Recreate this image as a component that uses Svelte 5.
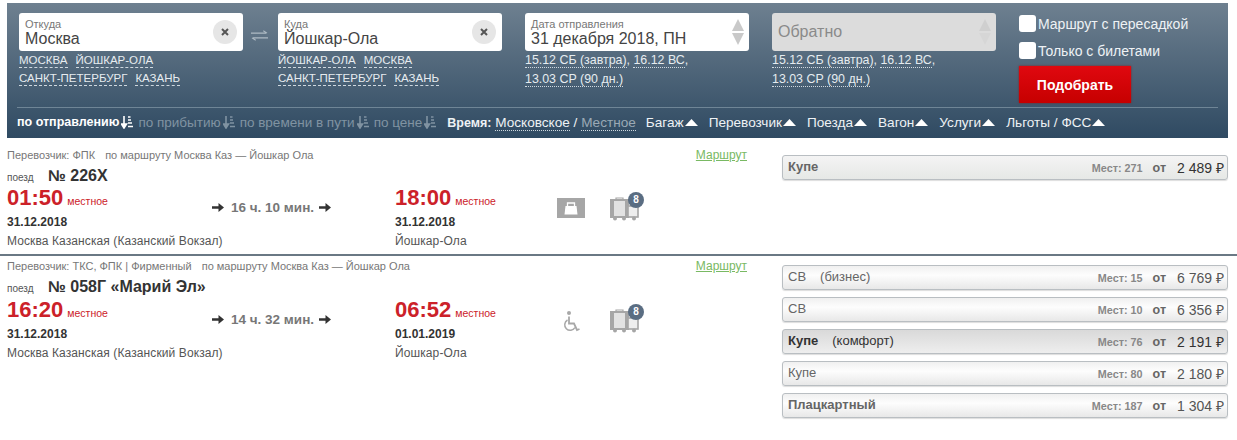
<script>
  const quick = [['МОСКВА', 'ЙОШКАР-ОЛА'], ['САНКТ-ПЕТЕРБУРГ', 'КАЗАНЬ']];
  const quick2 = [['ЙОШКАР-ОЛА', 'МОСКВА'], ['САНКТ-ПЕТЕРБУРГ', 'КАЗАНЬ']];
  const sorts = [
    { t: 'по отправлению', on: true },
    { t: 'по прибытию' },
    { t: 'по времени в пути' },
    { t: 'по цене' }
  ];
  const filters = ['Багаж', 'Перевозчик', 'Поезда', 'Вагон', 'Услуги', 'Льготы / ФСС'];
  const trains = [
    {
      carrier: 'Перевозчик: ФПК', route: 'по маршруту Москва Каз — Йошкар Ола', num: '№ 226Х',
      dep: '01:50', depDate: '31.12.2018', arr: '18:00', arrDate: '31.12.2018', dur: '16 ч. 10 мин.',
      icon: 'bag', h: 116,
      seats: [{ n: 'Купе', strong: true, m: 271, p: '2 489', shade: true }]
    },
    {
      carrier: 'Перевозчик: ТКС, ФПК | Фирменный', route: 'по маршруту Москва Каз — Йошкар Ола', num: '№ 058Г «Марий Эл»',
      dep: '16:20', depDate: '31.12.2018', arr: '06:52', arrDate: '01.01.2019', dur: '14 ч. 32 мин.',
      icon: 'wheel', h: 183,
      seats: [
        { n: 'СВ', x: '(бизнес)', m: 15, p: '6 769' },
        { n: 'СВ', m: 10, p: '6 356' },
        { n: 'Купе', strong: true, x: '(комфорт)', m: 76, p: '2 191', active: true },
        { n: 'Купе', m: 80, p: '2 180' },
        { n: 'Плацкартный', strong: true, m: 187, p: '1 304' }
      ]
    }
  ];
</script>

{#snippet sortIcon()}
  <svg class="sorticon" width="12" height="13" viewBox="0 0 12 13" aria-hidden="true">
    <path d="M3 0v9M0.5 8l2.500 4 2.500-4z" fill="currentColor" stroke="currentColor" stroke-width="1.600"/>
    <path d="M7 1h2.500M7 4h3M7 7h4M7 10.500h5" stroke="currentColor" stroke-width="1.600" fill="none"/>
  </svg>
{/snippet}

{#snippet arrow()}
  <svg width="12" height="9" viewBox="0 0 12 9" aria-hidden="true"><path d="M0 3.300h6.500V0L12 4.500 6.500 9V5.700H0z" fill="#333"/></svg>
{/snippet}

{#snippet tri()}
  <svg class="tri" width="13" height="7" viewBox="0 0 13 7" aria-hidden="true"><path d="M0 7 6.500 0 13 7z" fill="#fff"/></svg>
{/snippet}

<div class="page">
  <header class="panel">
    <div class="search">
      <div class="col">
        <div class="box">
          <div class="txt"><small>Откуда</small><span>Москва</span></div>
          <button class="clear" aria-label="Очистить"><svg width="8" height="8" viewBox="0 0 8 8"><path d="M1 1l6 6M7 1 1 7" stroke="#555" stroke-width="2"/></svg></button>
        </div>
        {#each quick as line}
          <div class="quick">{#each line as q}<a href="#a">{q}</a>{/each}</div>
        {/each}
      </div>
      <svg class="swap" width="18" height="11" viewBox="0 0 18 11" aria-hidden="true">
        <path d="M0 3h16M13 .5 17 3M18 8H2M5 10.500 1 8" stroke="#aebac4" stroke-width="1.100" fill="none"/>
      </svg>
      <div class="col">
        <div class="box">
          <div class="txt"><small>Куда</small><span>Йошкар-Ола</span></div>
          <button class="clear" aria-label="Очистить"><svg width="8" height="8" viewBox="0 0 8 8"><path d="M1 1l6 6M7 1 1 7" stroke="#555" stroke-width="2"/></svg></button>
        </div>
        {#each quick2 as line}
          <div class="quick">{#each line as q}<a href="#a">{q}</a>{/each}</div>
        {/each}
      </div>
      <div class="col date">
        <div class="box">
          <div class="txt"><small>Дата отправления</small><span>31 декабря 2018, ПН</span></div>
          <div class="spin"><i class="up"></i><i class="down"></i></div>
        </div>
        <div class="dates"><a href="#a">15.12 СБ (завтра)</a>, <a href="#a">16.12 ВС</a>,</div>
        <div class="dates"><a href="#a">13.03 СР (90 дн.)</a></div>
      </div>
      <div class="col date">
        <div class="box off">
          <div class="txt"><span>Обратно</span></div>
          <div class="spin"><i class="up"></i><i class="down"></i></div>
        </div>
        <div class="dates"><a href="#a">15.12 СБ (завтра)</a>, <a href="#a">16.12 ВС</a>,</div>
        <div class="dates"><a href="#a">13.03 СР (90 дн.)</a></div>
      </div>
      <div class="opts">
        <label><span class="check"></span>Маршрут с пересадкой</label>
        <label><span class="check"></span>Только с билетами</label>
        <button class="go">Подобрать</button>
      </div>
    </div>
    <nav class="bar">
      <div class="sorts">
        {#each sorts as s}
          <span class="sort" class:on={s.on}>{s.t}{@render sortIcon()}</span>
        {/each}
      </div>
      <div class="time"><b>Время:</b> <a href="#a">Московское</a> / <a href="#a" class="dim">Местное</a></div>
      <div class="filters">
        {#each filters as f}<span>{f}{@render tri()}</span>{/each}
      </div>
    </nav>
  </header>

  {#each trains as t, i}
    <section class="train" class:sep={i > 0} style="height:{t.h}px">
      <div class="info">
        <div class="top">
          <div class="meta"><span>{t.carrier}</span><span>{t.route}</span></div>
          <a href="#a" class="route">Маршрут</a>
        </div>
        <div class="num"><small>поезд</small><b>{t.num}</b></div>
        <div class="times">
          <div class="point">
            <div class="tm"><b>{t.dep}</b><span>местное</span></div>
            <div class="dt">{t.depDate}</div>
            <div class="st">Москва Казанская (Казанский Вокзал)</div>
          </div>
          <div class="dur">{@render arrow()}<span>{t.dur}</span>{@render arrow()}</div>
          <div class="point">
            <div class="tm"><b>{t.arr}</b><span>местное</span></div>
            <div class="dt">{t.arrDate}</div>
            <div class="st">Йошкар-Ола</div>
          </div>
          <div class="icons">
            <div class="ic1">
              {#if t.icon === 'bag'}
                <svg width="28" height="20" viewBox="0 0 28 20" aria-hidden="true">
                  <rect width="28" height="20" fill="#a6a6a6"/>
                  <path d="M8.500 8h11l1 8.500h-13z" fill="#fff"/>
                  <path d="M10.500 8V5h7v3" stroke="#fff" stroke-width="1.300" fill="none"/>
                </svg>
              {:else}
                <svg class="wheel" width="17" height="21" viewBox="0 0 17 21" aria-hidden="true">
                  <circle cx="6" cy="2" r="2" fill="#a8a8a8"/>
                  <path d="M6 5.500v7h5l3 6.500 2.500-1" stroke="#a8a8a8" stroke-width="1.800" fill="none"/>
                  <path d="M4.500 9a5.500 5.500 0 1 0 7.500 7.500" stroke="#a8a8a8" stroke-width="1.500" fill="none"/>
                </svg>
              {/if}
            </div>
            <div class="ic2">
              <svg width="30" height="24" viewBox="0 0 30 24" aria-hidden="true">
                <rect x="1" y="3" width="17" height="17" fill="#e2e2e2" stroke="#a6a6a6" stroke-width="2"/>
                <rect x="0" y="3" width="4" height="17" fill="#a6a6a6"/>
                <rect x="15" y="3" width="3" height="17" fill="#a6a6a6"/>
                <path d="M6 3V1h7v2" stroke="#a6a6a6" stroke-width="1.200" fill="none"/>
                <rect x="18" y="9" width="10" height="11" fill="#eee" stroke="#a6a6a6" stroke-width="1.600"/>
                <circle cx="5" cy="21.500" r="2" fill="#a6a6a6"/>
                <circle cx="14" cy="21.500" r="2" fill="#a6a6a6"/>
                <circle cx="24" cy="21.500" r="2" fill="#a6a6a6"/>
              </svg>
              <span class="badge">8</span>
            </div>
          </div>
        </div>
      </div>
      <div class="seats">
        {#each t.seats as s}
          <button class="seat" class:active={s.active} class:shade={s.shade}>
            <span class="name" class:strong={s.strong}>{s.n}{#if s.x}<em>{s.x}</em>{/if}</span>
            <span class="mest">Мест: {s.m}</span>
            <span class="ot">от</span>
            <span class="price" class:dark={s.strong && s.n === 'Купе'}>{s.p} ₽</span>
          </button>
        {/each}
      </div>
    </section>
  {/each}
</div>

<style>
  :global(body) { margin: 0; background: #fff; }
  .page { width: 1237px; height: 440px; overflow: hidden; padding-top: 3px; box-sizing: border-box; font-family: "Liberation Sans", Arial, sans-serif; color: #333; }
  a { color: inherit; text-decoration: none; }
  button { font-family: inherit; padding: 0; border: 0; }

  .panel { margin: 0 9px 0 7px; height: 135px; box-sizing: border-box; padding: 10px 10px 0 10px; background: linear-gradient(#6e8090, #2f4a62); color: #fff; }
  .search { display: flex; height: 94px; padding-left: 2px; }
  .col { width: 224px; flex: none; }
  .date { margin-left: 23px; }
  .swap { flex: none; margin: 17px 10px 0 8px; width: 17px; }
  .box { height: 38px; background: #fff; border-radius: 3px; display: flex; align-items: center; box-sizing: border-box; padding: 0 6px; color: #444; }
  .txt { flex: 1; display: flex; flex-direction: column; min-width: 0; }
  .txt small { font-size: 11px; line-height: 11px; color: #777; margin-top: 2px; }
  .txt span { font-size: 16px; line-height: 18px; white-space: nowrap; }
  .clear { width: 24px; height: 24px; border-radius: 50%; background: #e6e6e6; display: flex; align-items: center; justify-content: center; margin-top: -1px; }
  .quick { font-size: 11.500px; white-space: nowrap; display: flex; gap: 8px; }
  .quick a { border-bottom: 1px dashed #cfd8df; line-height: 13px; margin-top: 3px; margin-bottom: 1px; color: #e6ecf0; }
  .dates { font-size: 12.400px; line-height: 19px; white-space: nowrap; color: #e6ecf0; }
  .dates a { border-bottom: 1px dotted #cfd8df; }
  .spin { display: flex; flex-direction: column; gap: 2px; margin-right: -1px; }
  .spin i { width: 0; height: 0; border-left: 6.500px solid transparent; border-right: 6.500px solid transparent; }
  .spin .up { border-bottom: 12px solid #c9c9c9; }
  .spin .down { border-top: 12px solid #c9c9c9; }
  .off { background: #dcdcdc; }
  .off .txt span { color: #8a8a8a; }
  .off .spin .down { border-top-color: #d6d6d6; }
  .off .spin .up { border-bottom-color: #cfcfcf; }
  .opts { margin-left: 23px; display: flex; flex-direction: column; align-items: flex-start; }
  .opts label { display: flex; align-items: center; font-size: 14px; white-space: nowrap; color: #eef2f5; }
  .opts label:first-child { height: 21px; }
  .opts label:nth-child(2) { height: 27px; margin-top: 3px; }
  .check { width: 17px; height: 17px; background: #fff; border-radius: 3px; margin-right: 2px; }
  .go { width: 112px; height: 37px; margin-top: 2px; background: linear-gradient(#e0080f, #c60000); color: #fff; font-size: 14px; font-weight: 700; box-shadow: 0 0 2px #8a2020; }

  .bar { border-top: 1px solid #6f8596; display: flex; align-items: center; height: 28px; font-size: 13.600px; white-space: nowrap; color: #eef2f5; }
  .sorts { display: flex; gap: 5px; }
  .sort { display: flex; align-items: center; gap: 2px; color: #8093a2; font-size: 13.500px; }
  .sort.on { color: #fff; font-weight: 700; font-size: 12.500px; }
  .sorticon { flex: none; }
  .time { margin-left: 11px; }
  .time b { font-size: 12.500px; }
  .time a { border-bottom: 1px dotted #cfd8df; }
  .time .dim { color: #9aa9b5; }
  .filters { display: flex; gap: 11px; margin-left: 10px; }
  .filters span { display: flex; align-items: center; gap: 1px; }

  .train { display: flex; box-sizing: border-box; padding-top: 2px; }
  .train.sep { border-top: 2px solid #6a7884; }
  .info { width: 740px; margin-left: 7px; flex: none; }
  .top { display: flex; justify-content: space-between; font-size: 11px; color: #777; height: 27px; padding-top: 9px; box-sizing: border-box; }
  .sep .top { padding-top: 2px; height: 20px; }
  .meta { display: flex; gap: 10px; }
  .route { font-size: 12px; color: #79b963; text-decoration: underline; margin-top: -1px; }
  .num { display: flex; align-items: baseline; height: 18px; }
  .num small { font-size: 10px; width: 41px; color: #555; }
  .num b { font-size: 16px; color: #333; }
  .times { display: grid; grid-template-columns: 205px 183px 162px 1fr; margin-top: 2px; }
  .sep .times { margin-top: 3px; }
  .tm { display: flex; align-items: baseline; gap: 4px; height: 22px; }
  .tm b { font-size: 22px; line-height: 22px; color: #cc2129; }
  .tm span { font-size: 10.500px; color: #cc2129; }
  .dt { font-size: 12px; font-weight: 700; line-height: 14px; margin-top: 6px; }
  .st { font-size: 12px; line-height: 14px; margin-top: 5px; color: #555; letter-spacing: 0.100px; white-space: nowrap; }
  .dur { display: flex; align-items: center; gap: 7px; font-size: 13.500px; font-weight: 700; color: #777; height: 14px; margin-top: 13px; }
  .dur span { margin-right: -2px; }
  .icons { display: flex; align-items: flex-start; margin-top: 11px; }
  .ic1 { width: 53px; }
  .wheel { margin-left: 6px; margin-top: 1px; display: block; }
  .ic2 { position: relative; margin-top: -1px; }
  .badge { position: absolute; left: 18px; top: -5px; width: 16px; height: 16px; border-radius: 50%; background: #5a6d82; color: #fff; font-size: 10px; font-weight: 700; line-height: 16px; text-align: center; }

  .seats { width: 446px; margin-left: 35px; flex: none; display: flex; flex-direction: column; gap: 7px; padding-top: 15px; }
  .sep .seats { padding-top: 7px; }
  .seat { display: flex; align-items: center; height: 25px; box-sizing: border-box; padding: 0 3px 0 5px; background: linear-gradient(#f0f0f0, #fdfdfd 40%, #e8e8e8); border: 1px solid #b9bec2; border-radius: 3px; color: #666; white-space: nowrap; font-size: 13px; box-shadow: 0 1px 1px #ddd; }
  .seat.shade { background: linear-gradient(#f4f4f4, #e6e8e6); }
  .seat.active { background: linear-gradient(#d9d9d9, #eee); }
  .name { flex: 1; text-align: left; padding-bottom: 2px; }
  .name.strong { font-weight: 700; }
  .name em { font-style: normal; font-weight: 400; margin-left: 14px; }
  .active .name { color: #333; }
  .mest { font-size: 10.800px; font-weight: 700; color: #888; }
  .ot { font-size: 12.500px; font-weight: 700; margin: 0 11px 0 10px; }
  .price { font-size: 14px; color: #555; padding-bottom: 1px; }
  .price.dark { color: #333; }
</style>
